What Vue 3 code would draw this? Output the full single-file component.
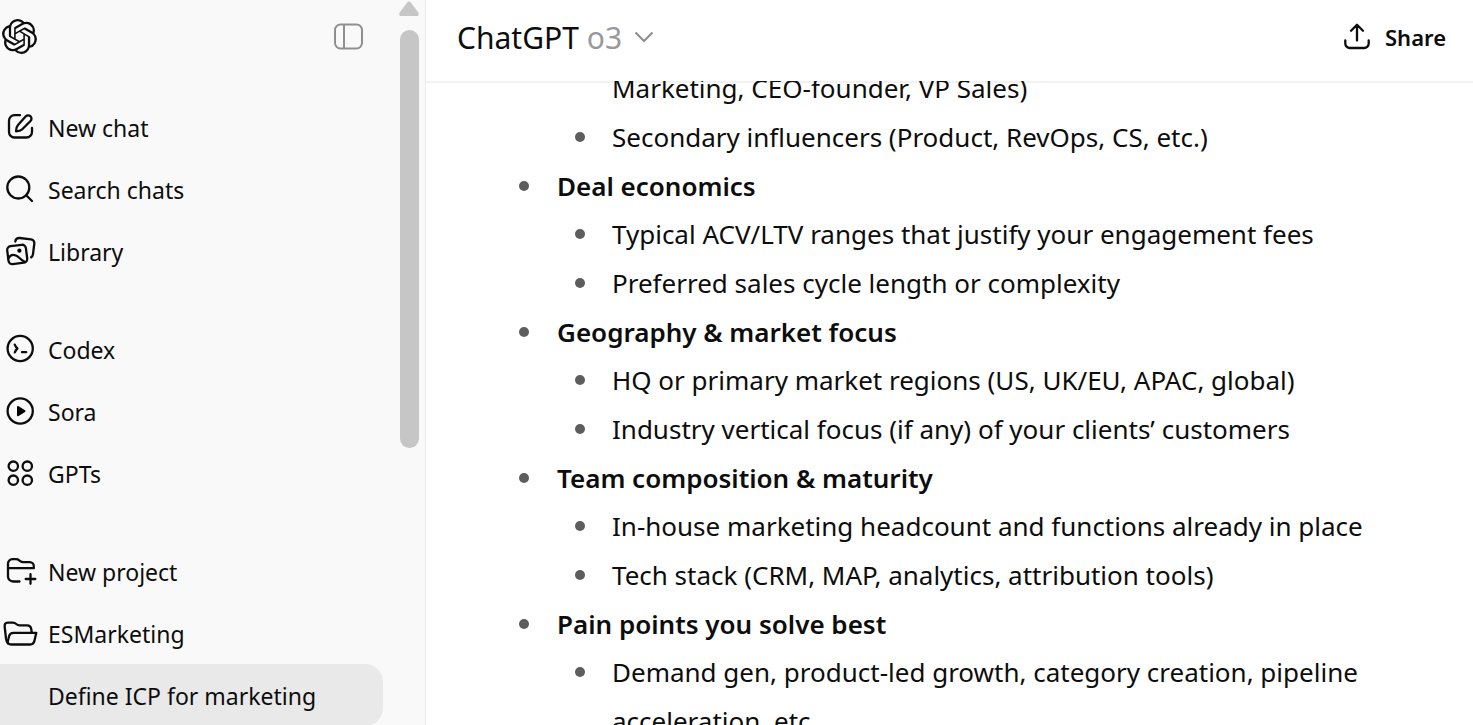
<template>
  <div class="chat-app">
    <aside class="sidebar">
      <div class="sidebar-content">
        <div class="sidebar-top">
          <a href="#" class="logo" aria-label="ChatGPT home">
            <svg width="35" height="35" viewBox="0 0 24 24" fill="currentColor">
              <path d="M22.2819 9.8211a5.9847 5.9847 0 0 0-.5157-4.9108 6.0462 6.0462 0 0 0-6.5098-2.9A6.0651 6.0651 0 0 0 4.9807 4.1818a5.9847 5.9847 0 0 0-3.9977 2.9 6.0462 6.0462 0 0 0 .7427 7.0966 5.98 5.98 0 0 0 .511 4.9107 6.051 6.051 0 0 0 6.5146 2.9001A5.9847 5.9847 0 0 0 13.2599 24a6.0557 6.0557 0 0 0 5.7718-4.2058 5.9894 5.9894 0 0 0 3.9977-2.9001 6.0557 6.0557 0 0 0-.7475-7.0729zm-9.022 12.6081a4.4755 4.4755 0 0 1-2.8764-1.0408l.1419-.0804 4.7783-2.7582a.7948.7948 0 0 0 .3927-.6813v-6.7369l2.02 1.1686a.071.071 0 0 1 .038.052v5.5826a4.504 4.504 0 0 1-4.4945 4.4944zm-9.6607-4.1254a4.4708 4.4708 0 0 1-.5346-3.0137l.142.0852 4.783 2.7582a.7712.7712 0 0 0 .7806 0l5.8428-3.3685v2.3324a.0804.0804 0 0 1-.0332.0615L9.74 19.9502a4.4992 4.4992 0 0 1-6.1408-1.6464zM2.3408 7.8956a4.485 4.485 0 0 1 2.3655-1.9728V11.6a.7664.7664 0 0 0 .3879.6765l5.8144 3.3543-2.0201 1.1685a.0757.0757 0 0 1-.071 0l-4.8303-2.7865A4.504 4.504 0 0 1 2.3408 7.872zm16.5963 3.8558L13.1038 8.364 15.1192 7.2a.0757.0757 0 0 1 .071 0l4.8303 2.7913a4.4944 4.4944 0 0 1-.6765 8.1042v-5.6772a.79.79 0 0 0-.407-.667zm2.0107-3.0231l-.142-.0852-4.7735-2.7818a.7759.7759 0 0 0-.7854 0L9.409 9.2297V6.8974a.0662.0662 0 0 1 .0284-.0615l4.8303-2.7866a4.4992 4.4992 0 0 1 6.6802 4.66zM8.3065 12.863l-2.02-1.1638a.0804.0804 0 0 1-.038-.0567V6.0742a4.4992 4.4992 0 0 1 7.3757-3.4537l-.142.0805L8.704 5.459a.7948.7948 0 0 0-.3927.6813zm1.0976-2.3654l2.602-1.4998 2.6069 1.4998v2.9994l-2.5974 1.4997-2.6067-1.4997Z" />
            </svg>
          </a>
          <button class="toggle" type="button" aria-label="Close sidebar">
            <svg width="30" height="28" viewBox="0 0 30 28" fill="none" stroke="currentColor" stroke-width="2">
              <rect x="2" y="2.5" width="27" height="24" rx="5.5" />
              <path d="M11 2.5v24" />
            </svg>
          </button>
        </div>

        <nav class="menu">
          <div v-for="(group, index) in groups" :key="index" class="menu-group">
            <a
                v-for="item in group"
                :key="item.label"
                href="#"
                class="menu-item"
                :class="{ active: item.active }"
            >
              <svg class="menu-icon" width="36" height="36" viewBox="0 0 36 36">
                <path v-for="d in item.strokes" :key="d" :d="d" class="line" />
                <path v-if="item.fill" :d="item.fill" class="solid" />
              </svg>
              <span>{{ item.label }}</span>
            </a>
          </div>
        </nav>
      </div>

      <div class="scrollbar">
        <svg width="20" height="16" viewBox="0 0 20 16">
          <path d="M8.2 2.4Q10 .4 11.8 2.4L19.3 12.6Q20.6 16 18 16H2Q-.6 16 .7 12.6Z" />
        </svg>
        <div class="thumb"></div>
      </div>
    </aside>

    <main class="main">
      <header class="header">
        <button class="model" type="button">
          <span>ChatGPT</span>
          <span class="version">o3</span>
          <svg width="20" height="12" viewBox="0 0 20 12" fill="none" stroke="currentColor" stroke-width="2.2">
            <path d="M1.5 1.5L10 10l8.5-8.5" />
          </svg>
        </button>
        <button class="share" type="button">
          <svg width="28" height="28" viewBox="0 0 28 28" fill="none" stroke="currentColor" stroke-width="2.3" stroke-linecap="round" stroke-linejoin="round">
            <path d="M14 17.5V2M8 7.7l6-6 6 6M2.3 17.5v3a4.5 4.500 0 0 0 4.5 4.5h14.4a4.5 4.5 0 0 0 4.5-4.500v-3" />
          </svg>
          <span>Share</span>
        </button>
      </header>

      <div class="conversation">
        <ul class="topics">
          <li v-for="(topic, index) in topics" :key="index" :class="{ continued: !topic.title }">
            <div>
              <strong v-if="topic.title">{{ topic.title }}</strong>
              <ul class="points">
                <li
                    v-for="(point, i) in topic.points"
                    :key="point"
                    :class="{ continued: !topic.title && i === 0 }"
                ><span>{{ point }}</span></li>
              </ul>
            </div>
          </li>
        </ul>
      </div>
    </main>
  </div>
</template>

<script setup>
const groups = [
  [
    {
      label: 'New chat',
      strokes: [
        'M18 6.2h-5.5a5.5 5.5 0 0 0-5.5 5.5v11.3a5.5 5.5 0 0 0 5.5 5.5h12a5.5 5.5 0 0 0 5.5-5.5V19',
        'M23.8 7.3a3.3 3.3 0 0 1 4.7 4.7l-8.5 8.5q-1.7 1.7-6 1.8.2-4.3 1.8-6z'
      ]
    },
    {
      label: 'Search chats',
      strokes: ['M27.3 16.5a11 11 0 1 1-22 0 11 11 0 1 1 22 0', 'M24.2 24.2L30 30']
    },
    {
      label: 'Library',
      strokes: [
        'M8.5 13.2l11.2-1.4a3.8 3.8 0 0 1 4.2 3.3l1.3 10.4a3.8 3.8 0 0 1-3.3 4.2l-11.2 1.4a3.8 3.8 0 0 1-4.2-3.3L5.2 17.4a3.8 3.8 0 0 1 3.3-4.2',
        'M6.3 25.5q2.2-4 5.2-3.7 3 .2 6 3.2 2.2 2.2 5.5 4',
        'M13.3 8.5q.4-3.7 4.5-3.5l11.2 1.4a3.8 3.8 0 0 1 3.3 4.2l-1.3 10.5q-.3 2.1-1.8 3.2'
      ],
      fill: 'M19.5 17.7a2.1 2.1 0 1 1-4.2 0 2.1 2.1 0 1 1 4.2 0'
    }
  ],
  [
    {
      label: 'Codex',
      strokes: [
        'M30.8 17.5a12.6 12.6 0 1 1-25.2 0 12.6 12.6 0 1 1 25.2 0',
        'M12.8 13.6q1 2.6 2.6 3.9-1.6 1.3-2.6 3.9',
        'M20 21.2h4.2'
      ]
    },
    {
      label: 'Sora',
      strokes: ['M30.8 18a12.6 12.6 0 1 1-25.2 0 12.6 12.6 0 1 1 25.2 0'],
      fill: 'M15 14.2q0-1.8 1.6-.9l6.4 4q1.2.8 0 1.6l-6.4 4q-1.6.9-1.6-.9z'
    },
    {
      label: 'GPTs',
      strokes: [
        'M16 11.2a4.7 4.7 0 1 1-9.4 0 4.7 4.7 0 1 1 9.4 0',
        'M30 11.2a4.7 4.7 0 1 1-9.4 0 4.7 4.7 0 1 1 9.4 0',
        'M16 25.2a4.7 4.7 0 1 1-9.4 0 4.7 4.7 0 1 1 9.4 0',
        'M30 25.2a4.7 4.7 0 1 1-9.4 0 4.7 4.7 0 1 1 9.4 0'
      ]
    }
  ],
  [
    {
      label: 'New project',
      strokes: [
        'M17.5 28.5h-6.5a5 5 0 0 1-5-5V10.5a4.3 4.3 0 0 1 4.3-4.3h3.7q1.8 0 3.2 1.2l1 .8q1.3 1 3 1h6.6a4 4 0 0 1 4 4v2H6',
        'M28.5 21.2v9.6M23.7 26h9.6'
      ]
    },
    {
      label: 'ESMarketing',
      strokes: [
        'M6 28.5Q4.5 27 4 23.5L2.7 12q-.5-4.3 3-4.3h5.2q1.8 0 3.3 1.3 1.5 1.3 3.5 1.3h7.3q3.8 0 4.3 4l.5 3.5',
        'M11.5 17.8h22.8l-1.8 7.7q-.8 4-4.5 4H9.5q-4.5 0-3.5-4l1.2-4.7q.8-3 4.3-3'
      ]
    },
    { label: 'Define ICP for marketing', active: true }
  ]
]

const topics = [
  {
    points: [
      'Marketing, CEO-founder, VP Sales)',
      'Secondary influencers (Product, RevOps, CS, etc.)'
    ]
  },
  {
    title: 'Deal economics',
    points: [
      'Typical ACV/LTV ranges that justify your engagement fees',
      'Preferred sales cycle length or complexity'
    ]
  },
  {
    title: 'Geography & market focus',
    points: [
      'HQ or primary market regions (US, UK/EU, APAC, global)',
      'Industry vertical focus (if any) of your clients’ customers'
    ]
  },
  {
    title: 'Team composition & maturity',
    points: [
      'In-house marketing headcount and functions already in place',
      'Tech stack (CRM, MAP, analytics, attribution tools)'
    ]
  },
  {
    title: 'Pain points you solve best',
    points: [
      'Demand gen, product-led growth, category creation, pipeline acceleration, etc.'
    ]
  }
]
</script>

<style>
body {
  margin: 0;
  overflow: hidden;
}
</style>

<style scoped>
.chat-app {
  display: flex;
  height: 100vh;
  overflow: hidden;
  background: #fff;
  color: #0d0d0d;
  font-family: "Segoe UI", "Noto Sans", "Open Sans", sans-serif;
}

button {
  border: 0;
  padding: 0;
  background: none;
  color: inherit;
  font: inherit;
}

a {
  color: inherit;
  text-decoration: none;
}

svg {
  display: block;
  flex: none;
}

.sidebar {
  display: flex;
  flex: none;
  box-sizing: border-box;
  width: 426px;
  border-right: 1px solid #ececec;
  background: #f9f9f9;
}

.sidebar-content {
  flex: 1;
}

.sidebar-top {
  display: flex;
  align-items: center;
  justify-content: space-between;
  height: 72px;
  margin-bottom: 24px;
  padding: 0 36px 0 2px;
}

.toggle {
  color: #8f8f8f;
}

.menu {
  display: flex;
  flex-direction: column;
  gap: 36px;
}

.menu-item {
  display: flex;
  align-items: center;
  gap: 10px;
  height: 62px;
  margin-right: 16px;
  padding-left: 2px;
  border-radius: 0 18px 18px 0;
  font-size: 23px;
  line-height: 32px;
  white-space: nowrap;
}

.menu-item span {
  padding-top: 2px;
}

.menu-item.active {
  background: #e9e9e9;
}

.line {
  fill: none;
  stroke: currentColor;
  stroke-width: 2.3;
  stroke-linecap: round;
  stroke-linejoin: round;
}

.scrollbar {
  display: flex;
  flex-direction: column;
  align-items: center;
  gap: 14px;
  width: 20px;
  padding-right: 6px;
  fill: #c6c6c6;
}

.thumb {
  width: 19px;
  height: 418px;
  border-radius: 10px;
  background: #c6c6c6;
}

.main {
  display: flex;
  flex: 1;
  flex-direction: column;
  min-width: 0;
}

.header {
  display: flex;
  flex: none;
  align-items: center;
  justify-content: space-between;
  height: 74px;
  padding: 0 27px 7px 31px;
}

.model {
  display: flex;
  align-items: center;
  gap: 8px;
  font-size: 30px;
}

.version {
  color: #9a9a9a;
}

.model svg {
  margin-left: 4px;
  color: #8f8f8f;
}

.share {
  display: flex;
  align-items: center;
  gap: 14px;
  font-size: 22px;
  font-weight: 600;
}

.conversation {
  flex: 1;
  min-height: 0;
  overflow: hidden;
  padding: 0 93px;
  box-shadow: inset 0 2px #f2f2f2;
  font-size: 26px;
  line-height: 49px;
}

ul {
  margin: 0;
  padding: 0;
  list-style: none;
}

/* the list is scrolled part way under the header */
.topics {
  margin-top: -17px;
}

li {
  display: grid;
  grid-template-columns: 38px 1fr;
}

li::before {
  content: "";
  width: 10px;
  height: 10px;
  margin-top: 19px;
  border-radius: 50%;
  background: #5d5d5d;
}

.continued::before {
  visibility: hidden;
}

.points li {
  grid-template-columns: 37px 1fr;
  margin-left: 18px;
}

strong {
  display: block;
  font-weight: 600;
  line-height: 48px;
}
</style>
